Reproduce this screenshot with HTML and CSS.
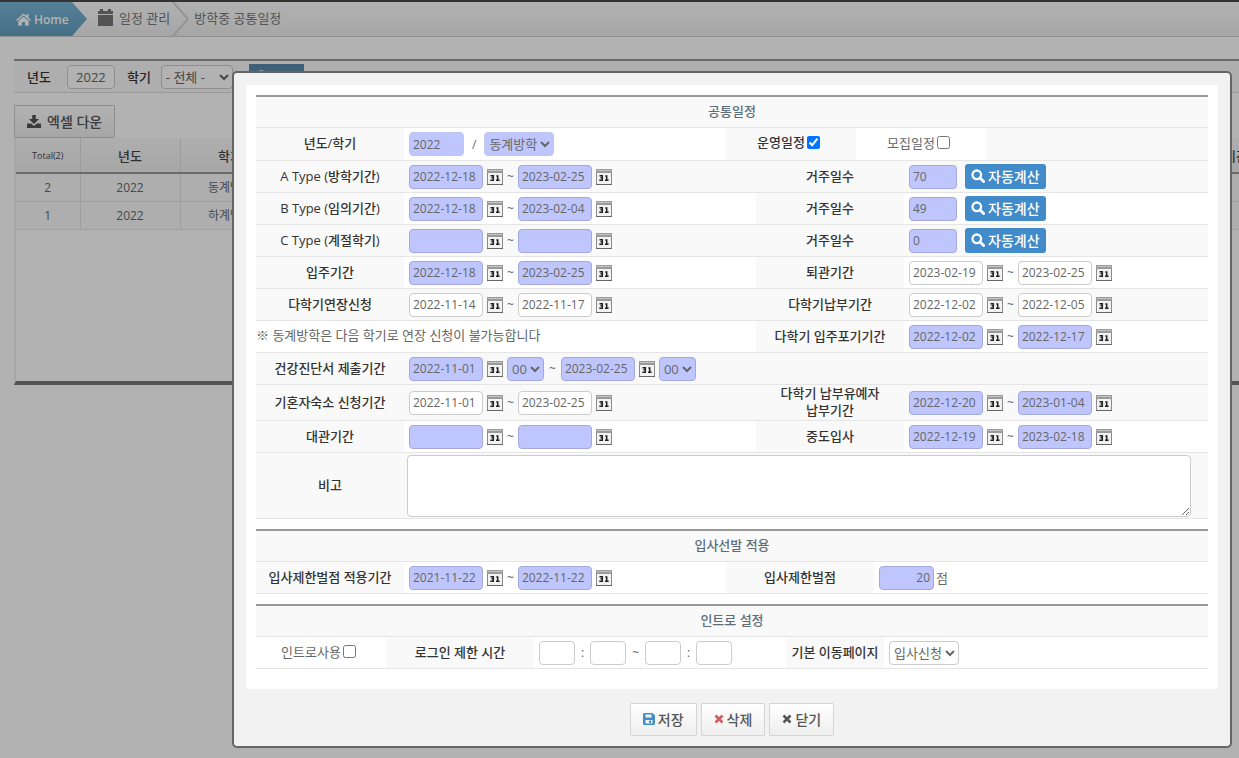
FILE: index.html
```html
<!DOCTYPE html>
<html lang="ko">
<head>
    <meta charset="utf-8">
    <title>방학중 공통일정</title>
    <link rel="stylesheet" href="styles.css">
</head>
<body>
    <!-- shared icons -->
    <svg class="sprite" aria-hidden="true">
        <symbol id="cal31" viewBox="0 0 16 16">
            <rect x="0.5" y="0.5" width="15" height="15" fill="#f2f2f2" stroke="#8a8a8a"/>
            <rect x="0" y="0" width="16" height="4" fill="#9a9a9a"/>
            <rect x="1" y="1" width="14" height="1" fill="#c4c4c4"/>
            <rect x="0" y="15" width="16" height="1" fill="#666"/>
            <path d="M3.5 6.7H6.3V8.8H4.5M6.3 8.8V11.3H3.3" fill="none" stroke="#222" stroke-width="1.5"/>
            <path d="M9.3 6.9H10.7V11.5M9 11.3H12.6" fill="none" stroke="#222" stroke-width="1.5"/>
        </symbol>
        <symbol id="search" viewBox="0 0 14 14">
            <circle cx="5.8" cy="5.8" r="4.3" fill="none" stroke="currentColor" stroke-width="2.3"/>
            <path d="M9 9L12.6 12.6" stroke="currentColor" stroke-width="2.8" stroke-linecap="round"/>
        </symbol>
        <symbol id="cross" viewBox="0 0 10 10">
            <path d="M1.5 1.5L8.5 8.5M8.5 1.5L1.5 8.5" stroke="currentColor" stroke-width="2.5"/>
        </symbol>
    </svg>

    <nav class="breadcrumb">
        <a class="home" href="#">
            <svg width="15" height="13" viewBox="0 0 15 13"><path fill="currentColor" d="M7.5 0.5L0 7L1 8L7.5 2.5L14 8L15 7L12.5 4.8V1H10.5V3.1ZM7.5 3.8L2.3 8.1V12.5H6V9H9V12.5H12.7V8.1Z"/></svg>
            Home
        </a>
        <a class="crumb" href="#">
            <svg width="15" height="17" viewBox="0 0 15 17"><path fill="currentColor" d="M0 2H2V0H5V2H10V0H13V2H15V5H0ZM0 6H15V17H0Z"/></svg>
            일정 관리
        </a>
        <svg class="sep" width="18" height="34" viewBox="0 0 18 34"><path d="M1 0L16 17L1 34" fill="none" stroke="#d4d4d4" stroke-width="2"/></svg>
        <span class="crumb">방학중 공통일정</span>
    </nav>

    <main class="page">
        <div class="filter">
            <label for="f-year">년도</label>
            <input class="box center" id="f-year" value="2022">
            <label for="f-term">학기</label>
            <select class="box" id="f-term"><option>- 전체 -</option></select>
            <button class="btn-blue square"><svg width="13" height="13"><use href="#search"/></svg>검색</button>
        </div>

        <button class="btn excel">
            <svg width="14" height="13" viewBox="0 0 14 13"><path fill="currentColor" d="M5.2 0H8.8V4H12L7 9L2 4H5.2ZM0 8.5H4L7 11L10 8.5H14V13H0Z"/></svg>
            엑셀 다운
        </button>

        <div class="grid">
            <table>
                <thead>
                    <tr><th class="c-no">Total(2)</th><th class="c-year">년도</th><th class="c-year">학기</th><th class="c-rest">기간</th></tr>
                </thead>
                <tbody>
                    <tr><td>2</td><td>2022</td><td>동계방학</td><td></td></tr>
                    <tr><td>1</td><td>2022</td><td>하계방학</td><td></td></tr>
                </tbody>
            </table>
        </div>
    </main>

    <div class="overlay"></div>

    <section class="modal" role="dialog" aria-label="공통일정">
        <div class="modal-body">

            <div class="panel">
                <h2>공통일정</h2>
                <div class="row row-top">
                    <label class="th" for="year">년도/학기</label>
                    <div class="td">
                        <input class="box req plain year" id="year" value="2022">
                        <span class="slash">/</span>
                        <select class="box req plain" aria-label="학기"><option>동계방학</option></select>
                    </div>
                    <label class="th check">운영일정<input type="checkbox" checked></label>
                    <label class="check">모집일정<input type="checkbox"></label>
                    <div class="th"></div>
                </div>
                <div class="row gray">
                    <label class="th" for="a1">A Type (방학기간)</label>
                    <div class="td">
                        <input class="box req date" id="a1" value="2022-12-18"><button class="cal" aria-label="달력"><svg><use href="#cal31"/></svg></button><span>~</span>
                        <input class="box req date" aria-label="종료일" value="2023-02-25"><button class="cal" aria-label="달력"><svg><use href="#cal31"/></svg></button>
                    </div>
                    <label class="th" for="a2">거주일수</label>
                    <div class="td wide">
                        <input class="box req num" id="a2" value="70">
                        <button class="btn-blue"><svg width="14" height="14"><use href="#search"/></svg>자동계산</button>
                    </div>
                </div>
                <div class="row">
                    <label class="th" for="b1">B Type (임의기간)</label>
                    <div class="td">
                        <input class="box req date" id="b1" value="2022-12-18"><button class="cal" aria-label="달력"><svg><use href="#cal31"/></svg></button><span>~</span>
                        <input class="box req date" aria-label="종료일" value="2023-02-04"><button class="cal" aria-label="달력"><svg><use href="#cal31"/></svg></button>
                    </div>
                    <label class="th" for="b2">거주일수</label>
                    <div class="td wide">
                        <input class="box req num" id="b2" value="49">
                        <button class="btn-blue"><svg width="14" height="14"><use href="#search"/></svg>자동계산</button>
                    </div>
                </div>
                <div class="row gray">
                    <label class="th" for="c1">C Type (계절학기)</label>
                    <div class="td">
                        <input class="box req date" id="c1"><button class="cal" aria-label="달력"><svg><use href="#cal31"/></svg></button><span>~</span>
                        <input class="box req date" aria-label="종료일"><button class="cal" aria-label="달력"><svg><use href="#cal31"/></svg></button>
                    </div>
                    <label class="th" for="c2">거주일수</label>
                    <div class="td wide">
                        <input class="box req num" id="c2" value="0">
                        <button class="btn-blue"><svg width="14" height="14"><use href="#search"/></svg>자동계산</button>
                    </div>
                </div>
                <div class="row">
                    <label class="th" for="d1">입주기간</label>
                    <div class="td">
                        <input class="box req date" id="d1" value="2022-12-18"><button class="cal" aria-label="달력"><svg><use href="#cal31"/></svg></button><span>~</span>
                        <input class="box req date" aria-label="종료일" value="2023-02-25"><button class="cal" aria-label="달력"><svg><use href="#cal31"/></svg></button>
                    </div>
                    <label class="th" for="d2">퇴관기간</label>
                    <div class="td">
                        <input class="box date" id="d2" value="2023-02-19"><button class="cal" aria-label="달력"><svg><use href="#cal31"/></svg></button><span>~</span>
                        <input class="box date" aria-label="종료일" value="2023-02-25"><button class="cal" aria-label="달력"><svg><use href="#cal31"/></svg></button>
                    </div>
                </div>
                <div class="row gray">
                    <label class="th" for="e1">다학기연장신청</label>
                    <div class="td">
                        <input class="box date" id="e1" value="2022-11-14"><button class="cal" aria-label="달력"><svg><use href="#cal31"/></svg></button><span>~</span>
                        <input class="box date" aria-label="종료일" value="2022-11-17"><button class="cal" aria-label="달력"><svg><use href="#cal31"/></svg></button>
                    </div>
                    <label class="th" for="e2">다학기납부기간</label>
                    <div class="td">
                        <input class="box date" id="e2" value="2022-12-02"><button class="cal" aria-label="달력"><svg><use href="#cal31"/></svg></button><span>~</span>
                        <input class="box date" aria-label="종료일" value="2022-12-05"><button class="cal" aria-label="달력"><svg><use href="#cal31"/></svg></button>
                    </div>
                </div>
                <div class="row">
                    <div class="note">※ 동계방학은 다음 학기로 연장 신청이 불가능합니다</div>
                    <label class="th" for="g2">다학기 입주포기기간</label>
                    <div class="td">
                        <input class="box req date" id="g2" value="2022-12-02"><button class="cal" aria-label="달력"><svg><use href="#cal31"/></svg></button><span>~</span>
                        <input class="box req date" aria-label="종료일" value="2022-12-17"><button class="cal" aria-label="달력"><svg><use href="#cal31"/></svg></button>
                    </div>
                </div>
                <div class="row gray">
                    <label class="th" for="h1">건강진단서 제출기간</label>
                    <div class="td span3">
                        <input class="box req date" id="h1" value="2022-11-01"><button class="cal" aria-label="달력"><svg><use href="#cal31"/></svg></button>
                        <select class="box req" aria-label="시작 시"><option>00</option></select><span class="till">~</span>
                        <input class="box req date" aria-label="종료일" value="2023-02-25"><button class="cal" aria-label="달력"><svg><use href="#cal31"/></svg></button>
                        <select class="box req" aria-label="종료 시"><option>00</option></select>
                    </div>
                </div>
                <div class="row row-tall gray">
                    <label class="th" for="i1">기혼자숙소 신청기간</label>
                    <div class="td">
                        <input class="box date" id="i1" value="2022-11-01"><button class="cal" aria-label="달력"><svg><use href="#cal31"/></svg></button><span>~</span>
                        <input class="box date" aria-label="종료일" value="2023-02-25"><button class="cal" aria-label="달력"><svg><use href="#cal31"/></svg></button>
                    </div>
                    <label class="th" for="i2">다학기 납부유예자<br>납부기간</label>
                    <div class="td">
                        <input class="box req date" id="i2" value="2022-12-20"><button class="cal" aria-label="달력"><svg><use href="#cal31"/></svg></button><span>~</span>
                        <input class="box req date" aria-label="종료일" value="2023-01-04"><button class="cal" aria-label="달력"><svg><use href="#cal31"/></svg></button>
                    </div>
                </div>
                <div class="row">
                    <label class="th" for="j1">대관기간</label>
                    <div class="td">
                        <input class="box req date" id="j1"><button class="cal" aria-label="달력"><svg><use href="#cal31"/></svg></button><span>~</span>
                        <input class="box req date" aria-label="종료일"><button class="cal" aria-label="달력"><svg><use href="#cal31"/></svg></button>
                    </div>
                    <label class="th" for="j2">중도입사</label>
                    <div class="td">
                        <input class="box req date" id="j2" value="2022-12-19"><button class="cal" aria-label="달력"><svg><use href="#cal31"/></svg></button><span>~</span>
                        <input class="box req date" aria-label="종료일" value="2023-02-18"><button class="cal" aria-label="달력"><svg><use href="#cal31"/></svg></button>
                    </div>
                </div>
                <div class="row gray">
                    <label class="th" for="memo">비고</label>
                    <div class="memo span3"><textarea id="memo"></textarea></div>
                </div>
            </div>

            <div class="panel">
                <h2>입사선발 적용</h2>
                <div class="row row-apply">
                    <label class="th" for="k1">입사제한벌점 적용기간</label>
                    <div class="td">
                        <input class="box req date" id="k1" value="2021-11-22"><button class="cal" aria-label="달력"><svg><use href="#cal31"/></svg></button><span>~</span>
                        <input class="box req date" aria-label="종료일" value="2022-11-22"><button class="cal" aria-label="달력"><svg><use href="#cal31"/></svg></button>
                    </div>
                    <label class="th" for="k2">입사제한벌점</label>
                    <div class="td point"><input class="box req year" id="k2" value="20">점</div>
                </div>
            </div>

            <div class="panel">
                <h2>인트로 설정</h2>
                <div class="row row-intro">
                    <label class="check">인트로사용<input type="checkbox"></label>
                    <label class="th" for="t1">로그인 제한 시간</label>
                    <div class="td time">
                        <input class="box" id="t1"><span>:</span>
                        <input class="box" aria-label="시작 분"><span>~</span>
                        <input class="box" aria-label="종료 시"><span>:</span>
                        <input class="box" aria-label="종료 분">
                    </div>
                    <label class="th" for="t2">기본 이동페이지</label>
                    <div class="td"><select class="box" id="t2"><option>입사신청</option></select></div>
                </div>
            </div>
        </div>

        <div class="modal-footer">
            <button class="btn"><svg class="blue" width="12" height="12" viewBox="0 0 12 12"><path fill="currentColor" fill-rule="evenodd" d="M1 0H9.5L12 2.5V11L11 12H1L0 11V1ZM2.5 1.5V4.5H8.5V1.5ZM2.5 7V10.5H9.5V7ZM6 7.5H8V10H6Z"/></svg>저장</button>
            <button class="btn"><svg class="red" width="10" height="10"><use href="#cross"/></svg>삭제</button>
            <button class="btn"><svg width="10" height="10"><use href="#cross"/></svg>닫기</button>
        </div>
    </section>
</body>
</html>
```

FILE: styles.css
```css
* {
    box-sizing: border-box;
}

body {
    margin: 0;
    min-height: 100vh;
    overflow: hidden;
    background: #fff;
    color: #666;
    font-family: "Open Sans", "Noto Sans CJK KR", sans-serif;
    font-size: 13px;
}

input, select, button, textarea {
    margin: 0;
    font-family: inherit;
    color: inherit;
}

button {
    cursor: pointer;
}

.sprite {
    position: absolute;
    width: 0;
    height: 0;
}

/* breadcrumb */
.breadcrumb {
    display: flex;
    align-items: center;
    height: 37px;
    border-top: 2px solid #4a4a4a;
    border-bottom: 1px solid #d0d0d0;
    background: linear-gradient(#fff, #eee);
}

.breadcrumb a {
    text-decoration: none;
}

.home {
    display: flex;
    align-items: center;
    gap: 3px;
    width: 87px;
    height: 34px;
    padding-left: 16px;
    background: linear-gradient(#7ab8d8, #639fc0);
    clip-path: polygon(0 0, 72px 0, 100% 50%, 72px 100%, 0 100%);
    color: #fff;
    font-size: 12px;
    font-weight: 600;
}

.crumb {
    display: flex;
    align-items: center;
    gap: 6px;
    padding: 0 0 3px 11px;
    color: #777;
}

.sep {
    margin: 0 -7px 0 2px;
}

/* list page under the dialog */
.page {
    padding: 22px 0 0 14px;
}

.filter {
    display: flex;
    align-items: center;
    gap: 12px;
    height: 34px;
    padding-left: 13px;
    border-top: 2px solid #999;
    border-bottom: 1px solid #ddd;
    background: #f9f9f9;
    color: #333;
    font-weight: 500;
}

.filter label + .box {
    margin-left: 4px;
}

.filter .box {
    width: 48px;
    font-size: 13px;
}

.filter label + select.box {
    width: 72px;
    margin-left: -2px;
}

.center {
    text-align: center;
}

.btn {
    display: inline-flex;
    align-items: center;
    justify-content: center;
    gap: 3px;
    height: 33px;
    padding: 0 12px 1px;
    border: 1px solid #d5d5d5;
    border-radius: 1px;
    background: linear-gradient(#fff, #eee);
    color: #555;
    font-size: 14px;
    font-weight: 500;
}

.excel {
    gap: 6px;
    margin-top: 12px;
    border-color: #ccc;
}

.grid {
    height: 247px;
    overflow: hidden;
    border-left: 2px solid #eee;
    border-bottom: 4px solid #777;
}

.grid table {
    width: calc(100% + 10px);
    table-layout: fixed;
    border-collapse: collapse;
}

.grid th {
    height: 35px;
    padding: 0;
    border-right: 1px solid #e0e0e0;
    border-bottom: 2px solid #999;
    background: linear-gradient(#fafafa, #eee);
    color: #444;
    font-weight: 500;
}

.grid td {
    height: 28px;
    padding: 0;
    border-right: 1px solid #e3e3e3;
    border-bottom: 1px solid #e3e3e3;
    background: #fafafa;
    font-size: 12px;
    text-align: center;
}

.grid .c-no {
    width: 64px;
    font-size: 9px;
    font-weight: 400;
}

.c-year {
    width: 100px;
}

.grid .c-rest {
    text-align: right;
}

.overlay {
    position: fixed;
    inset: 0;
    background: rgba(0, 0, 0, 0.3);
}

/* dialog */
.modal {
    position: absolute;
    top: 71px;
    left: 232px;
    right: 7px;
    padding: 12px 12px 10px;
    border: 2px solid #666;
    border-radius: 5px;
    background: #f2f2f2;
}

.modal-body {
    display: flex;
    flex-direction: column;
    gap: 10px;
    padding: 10px 10px 20px;
    background: #fff;
}

.panel {
    border-top: 2px solid #999;
}

.panel h2 {
    margin: 0;
    height: 31px;
    border-bottom: 1px solid #e5e5e5;
    background: #f9f9f9;
    color: #5a6d7a;
    font-size: 13px;
    font-weight: 500;
    line-height: 28px;
    text-align: center;
}

.row {
    display: grid;
    grid-template-columns: 148fr 352fr 148fr 304fr;
    min-height: 32px;
    border-bottom: 1px solid #e5e5e5;
}

.row-top {
    grid-template-columns: 148fr 322fr 130fr 130fr 222fr;
    min-height: 33px;
}

.row-tall {
    min-height: 36px;
}

.row-apply {
    grid-template-columns: 148fr 322fr 148fr 334fr;
}

.row-intro {
    grid-template-columns: 130fr 148fr 252fr 98fr 324fr;
}

.gray,
.th {
    background: #f9f9f9;
}

.th {
    display: flex;
    align-items: center;
    justify-content: center;
    padding-bottom: 1px;
    color: #333;
    font-weight: 500;
    line-height: 17px;
    text-align: center;
}

.td {
    display: flex;
    align-items: center;
    gap: 4px;
    padding-left: 5px;
    font-size: 12px;
}

.wide {
    gap: 8px;
}

.span3 {
    grid-column: span 3;
}

.note {
    grid-column: span 2;
    line-height: 29px;
}

.check {
    display: flex;
    align-items: center;
    justify-content: center;
    gap: 2px;
    padding: 0 5px 3px 0;
}

.check input {
    width: 13px;
    height: 13px;
}

.slash {
    margin: 0 4px;
}

.till {
    margin: 0 1px;
}

.box {
    height: 24px;
    padding: 0 3px;
    border: 1px solid #ccc;
    border-radius: 4px;
    background: #fff;
    color: #666;
    font-size: 12px;
}

select.box {
    padding: 0;
}

.td select.box {
    font-size: 13px;
}

.req {
    border-color: #a3a9dd;
    background: #bfc6fd;
}

.plain {
    border-color: #bfc6ef;
}

.date {
    width: 74px;
}

.year {
    width: 55px;
}

.num {
    width: 48px;
}

.time {
    gap: 6px;
    padding-left: 5px;
}

.time .box {
    width: 36px;
}

.point {
    gap: 2px;
    font-size: 13px;
}

.point .box {
    text-align: right;
}

.cal {
    width: 16px;
    height: 16px;
    margin-top: 1px;
    padding: 0;
    border: 0;
    background: none;
}

.cal svg {
    display: block;
    width: 16px;
    height: 16px;
}

.btn-blue {
    display: inline-flex;
    align-items: center;
    justify-content: center;
    gap: 3px;
    height: 25px;
    padding: 0 6px 1px;
    border: 0;
    border-radius: 3px;
    background: #428bca;
    color: #fff;
    font-size: 14px;
    font-weight: 500;
}

.filter .square {
    width: 55px;
    margin-left: 4px;
    border-radius: 0;
    background: #5a8aae;
    font-size: 13px;
}

.memo {
    padding: 2px 17px 1px 3px;
}

.memo textarea {
    display: block;
    width: 100%;
    height: 62px;
    border: 1px solid #ccc;
    border-radius: 4px;
    background: #fff;
}

.modal-footer {
    display: flex;
    justify-content: center;
    gap: 4px;
    padding: 14px 0 0;
}

.blue {
    color: #428bca;
}

.red {
    color: #d15b5b;
}
```
